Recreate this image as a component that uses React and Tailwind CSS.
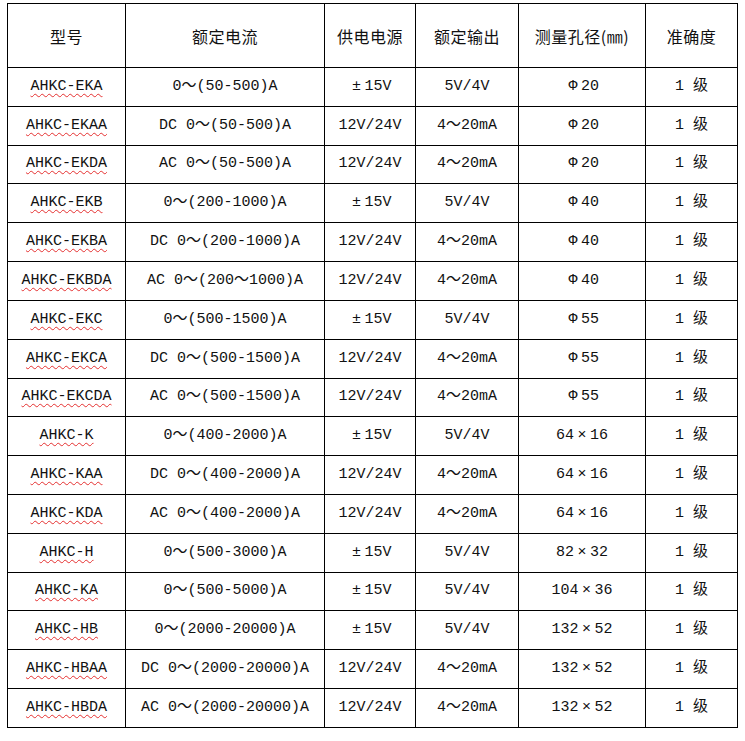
import React from 'react';

const headers = ['型号', '额定电流', '供电电源', '额定输出', '测量孔径(㎜)', '准确度'];

const rows = [
  ['AHKC-EKA', '0～(50-500)A', '±15V', '5V/4V', 'Φ20'],
  ['AHKC-EKAA', 'DC 0～(50-500)A', '12V/24V', '4～20mA', 'Φ20'],
  ['AHKC-EKDA', 'AC 0～(50-500)A', '12V/24V', '4～20mA', 'Φ20'],
  ['AHKC-EKB', '0～(200-1000)A', '±15V', '5V/4V', 'Φ40'],
  ['AHKC-EKBA', 'DC 0～(200-1000)A', '12V/24V', '4～20mA', 'Φ40'],
  ['AHKC-EKBDA', 'AC 0～(200～1000)A', '12V/24V', '4～20mA', 'Φ40'],
  ['AHKC-EKC', '0～(500-1500)A', '±15V', '5V/4V', 'Φ55'],
  ['AHKC-EKCA', 'DC 0～(500-1500)A', '12V/24V', '4～20mA', 'Φ55'],
  ['AHKC-EKCDA', 'AC 0～(500-1500)A', '12V/24V', '4～20mA', 'Φ55'],
  ['AHKC-K', '0～(400-2000)A', '±15V', '5V/4V', '64×16'],
  ['AHKC-KAA', 'DC 0～(400-2000)A', '12V/24V', '4～20mA', '64×16'],
  ['AHKC-KDA', 'AC 0～(400-2000)A', '12V/24V', '4～20mA', '64×16'],
  ['AHKC-H', '0～(500-3000)A', '±15V', '5V/4V', '82×32'],
  ['AHKC-KA', '0～(500-5000)A', '±15V', '5V/4V', '104×36'],
  ['AHKC-HB', '0～(2000-20000)A', '±15V', '5V/4V', '132×52'],
  ['AHKC-HBAA', 'DC 0～(2000-20000)A', '12V/24V', '4～20mA', '132×52'],
  ['AHKC-HBDA', 'AC 0～(2000-20000)A', '12V/24V', '4～20mA', '132×52'],
];

// row pitch is ~38.8px, so a few rows are one pixel shorter
const heights = [39, 39, 38, 39, 39, 39, 39, 39, 38, 39, 39, 39, 39, 38, 39, 39, 39];

const cols = 'grid grid-cols-[118px_199px_91px_103px_127px_92px]';
const cell = 'flex items-center justify-center border-r border-b border-black whitespace-pre';

// ±, Φ and × are full-width glyphs in the original
const Wide = ({ text }) =>
  text.split(/([±Φ×])/).map((part, i) =>
    /^[±Φ×]$/.test(part) ? (
      <span key={i} className="inline-block w-[16px] text-center">
        {part}
      </span>
    ) : (
      part
    )
  );

const App = () => {
  return (
    <div className="min-h-screen bg-white pt-[3px] pl-[7px] text-[#111] font-['Liberation_Mono','Noto_Sans_CJK_SC',monospace] text-[15px]">
      <div className="w-[731px] border-l border-t border-black">
        {/* Header */}
        <div className={`${cols} h-[64px]`}>
          {headers.map((h) => (
            <div key={h} className={`${cell} font-['Noto_Sans_CJK_SC',sans-serif] text-[16px] tracking-[0.5px]`}>
              {h}
            </div>
          ))}
        </div>

        {/* Body rows */}
        {rows.map((r, i) => (
          <div key={r[0]} className={`${cols} ${heights[i] === 38 ? 'h-[38px]' : 'h-[39px]'}`}>
            <div className={cell}>
              <span className="underline decoration-wavy decoration-[#e53030] decoration-1 underline-offset-[3px]">
                {r[0]}
              </span>
            </div>
            <div className={cell}>{r[1]}</div>
            <div className={cell}>
              <Wide text={r[2]} />
            </div>
            <div className={cell}>{r[3]}</div>
            <div className={cell}>
              <Wide text={r[4]} />
            </div>
            <div className={cell}>1 级</div>
          </div>
        ))}
      </div>
    </div>
  );
};

export default App;
